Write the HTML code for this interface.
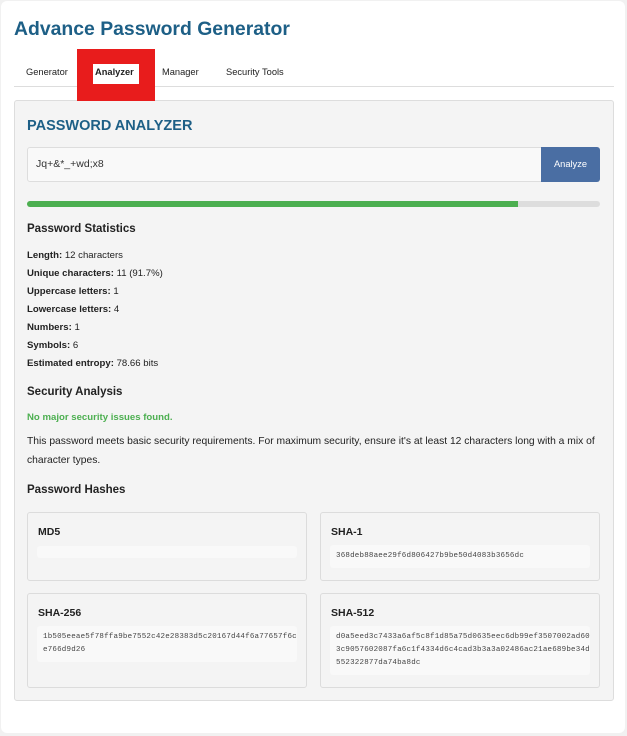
<!DOCTYPE html><html><head><style>
*{margin:0;padding:0;box-sizing:border-box}
body{width:627px;height:736px;background:#f1f1f1;font-family:"Liberation Sans",sans-serif;color:#222;position:relative;overflow:hidden}
.a{position:absolute;white-space:nowrap}
.wrap{position:absolute;left:1px;top:1px;width:624px;height:732px;background:#fff;border-radius:6px}
.b{font-weight:bold}
.s{font-size:9.6px}
.card{position:absolute;background:#f4f4f4;border:1px solid #dcdcdc;border-radius:3px}
.card h4{position:absolute;left:10px;top:13px;font-size:10.5px;font-weight:bold}
.hb{position:absolute;left:9px;right:9px;background:#f9f9f9;border-radius:3px;font-family:"Liberation Mono",monospace;font-size:7.5px;letter-spacing:0.2px;color:#444;line-height:13px;padding:5px 6px;white-space:nowrap;overflow:hidden}
</style></head><body>
<div class="wrap"></div>
<div class="a b" style="left:14px;top:18px;font-size:19.4px;color:#1d5f86">Advance Password Generator</div>
<div class="a" style="left:14px;top:86px;width:600px;height:1px;background:#ddd"></div>
<div class="a" style="left:14px;top:100px;width:600px;height:601px;background:#f4f4f4;border:1px solid #ddd;border-radius:3px"></div>
<div class="a" style="left:77px;top:49px;width:78px;height:52px;background:#e81c1c"></div>
<div class="a" style="left:93px;top:64px;width:46px;height:20px;background:#fff"></div>
<div class="a" style="left:26px;top:67px;font-size:9.3px">Generator</div>
<div class="a b" style="left:95px;top:67px;font-size:9.3px">Analyzer</div>
<div class="a" style="left:162px;top:67px;font-size:9.3px">Manager</div>
<div class="a" style="left:226px;top:67px;font-size:9.3px">Security Tools</div>
<div class="a b" style="left:27px;top:118px;font-size:14.5px;color:#1d5f86">PASSWORD ANALYZER</div>
<div class="a" style="left:27px;top:147px;width:516px;height:35px;background:#f9f9f9;border:1px solid #ddd;border-radius:3px 0 0 3px"></div>
<div class="a" style="left:36px;top:158px;font-size:10.5px;color:#333">Jq+&amp;*_+wd;x8</div>
<div class="a" style="left:541px;top:147px;width:59px;height:35px;background:#4a6ea3;border-radius:0 3px 3px 0;color:#fff;font-size:9.3px;text-align:center;line-height:35px">Analyze</div>
<div class="a" style="left:27px;top:201px;width:573px;height:6px;background:#ddd;border-radius:3px"></div>
<div class="a" style="left:27px;top:201px;width:491px;height:6px;background:#4caf50;border-radius:3px 0 0 3px"></div>
<div class="a b" style="left:27px;top:223px;font-size:11.5px">Password Statistics</div>
<div class="a s" style="left:27px;top:250px"><b>Length:</b> 12 characters</div>
<div class="a s" style="left:27px;top:268px"><b>Unique characters:</b> 11 (91.7%)</div>
<div class="a s" style="left:27px;top:286px"><b>Uppercase letters:</b> 1</div>
<div class="a s" style="left:27px;top:304px"><b>Lowercase letters:</b> 4</div>
<div class="a s" style="left:27px;top:322px"><b>Numbers:</b> 1</div>
<div class="a s" style="left:27px;top:340px"><b>Symbols:</b> 6</div>
<div class="a s" style="left:27px;top:358px"><b>Estimated entropy:</b> 78.66 bits</div>
<div class="a b" style="left:27px;top:386px;font-size:11.5px">Security Analysis</div>
<div class="a b s" style="left:27px;top:412px;color:#4caf50">No major security issues found.</div>
<div class="a" style="left:27px;top:436px;font-size:10.3px">This password meets basic security requirements. For maximum security, ensure it's at least 12 characters long with a mix of</div>
<div class="a" style="left:27px;top:455px;font-size:10.3px">character types.</div>
<div class="a b" style="left:27px;top:484px;font-size:11.5px">Password Hashes</div>
<div class="card" style="left:27px;top:512px;width:280px;height:69px"><h4>MD5</h4><div class="hb" style="top:33px;height:12px;padding:0"></div></div>
<div class="card" style="left:320px;top:512px;width:280px;height:69px"><h4>SHA-1</h4><div class="hb" style="top:32px">368deb88aee29f6d806427b9be50d4083b3656dc</div></div>
<div class="card" style="left:27px;top:593px;width:280px;height:95px"><h4>SHA-256</h4><div class="hb" style="top:32px">1b505eeae5f78ffa9be7552c42e28383d5c20167d44f6a77657f6cc<br>e766d9d26</div></div>
<div class="card" style="left:320px;top:593px;width:280px;height:95px"><h4>SHA-512</h4><div class="hb" style="top:32px">d0a5eed3c7433a6af5c8f1d85a75d0635eec6db99ef3507002ad606<br>3c9057602087fa6c1f4334d6c4cad3b3a3a02486ac21ae689be34d1<br>552322877da74ba8dc</div></div>
</body></html>
